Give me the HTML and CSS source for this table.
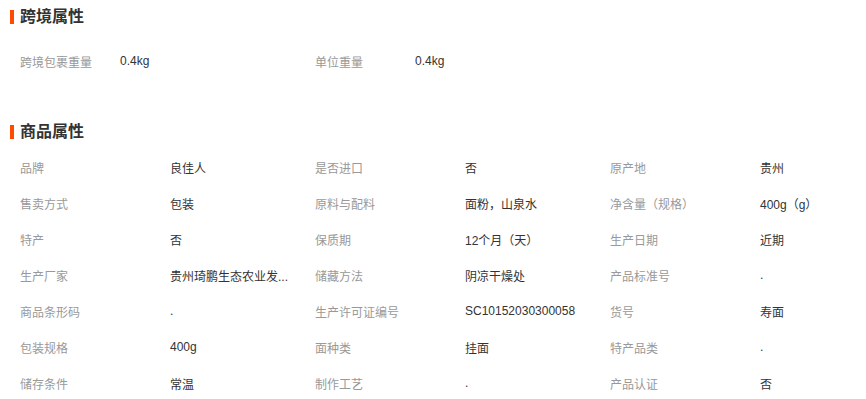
FILE: index.html
```html
<!DOCTYPE html>
<html lang="zh-CN">
<head>
<meta charset="utf-8">
<title>属性</title>
<link rel="stylesheet" href="styles.css">
</head>
<body>
<div class="page">
  <section class="block block-cross">
    <h3 class="block-title">跨境属性</h3>
    <ul class="attrs attrs-cross">
      <li class="attr"><span class="attr-name">跨境包裹重量</span><span class="attr-value">0.4kg</span></li>
      <li class="attr"><span class="attr-name">单位重量</span><span class="attr-value">0.4kg</span></li>
    </ul>
  </section>
  <section class="block block-goods">
    <h3 class="block-title">商品属性</h3>
    <ul class="attrs attrs-goods">
      <li class="attr"><span class="attr-name">品牌</span><span class="attr-value">良佳人</span></li>
      <li class="attr"><span class="attr-name">是否进口</span><span class="attr-value">否</span></li>
      <li class="attr"><span class="attr-name">原产地</span><span class="attr-value">贵州</span></li>
      <li class="attr"><span class="attr-name">售卖方式</span><span class="attr-value">包装</span></li>
      <li class="attr"><span class="attr-name">原料与配料</span><span class="attr-value">面粉，山泉水</span></li>
      <li class="attr"><span class="attr-name">净含量（规格）</span><span class="attr-value">400g（g）</span></li>
      <li class="attr"><span class="attr-name">特产</span><span class="attr-value">否</span></li>
      <li class="attr"><span class="attr-name">保质期</span><span class="attr-value">12个月（天）</span></li>
      <li class="attr"><span class="attr-name">生产日期</span><span class="attr-value">近期</span></li>
      <li class="attr"><span class="attr-name">生产厂家</span><span class="attr-value" title="贵州琦鹏生态农业发展有限公司">贵州琦鹏生态农业发...</span></li>
      <li class="attr"><span class="attr-name">储藏方法</span><span class="attr-value">阴凉干燥处</span></li>
      <li class="attr"><span class="attr-name">产品标准号</span><span class="attr-value">.</span></li>
      <li class="attr"><span class="attr-name">商品条形码</span><span class="attr-value">.</span></li>
      <li class="attr"><span class="attr-name">生产许可证编号</span><span class="attr-value">SC10152030300058</span></li>
      <li class="attr"><span class="attr-name">货号</span><span class="attr-value">寿面</span></li>
      <li class="attr"><span class="attr-name">包装规格</span><span class="attr-value">400g</span></li>
      <li class="attr"><span class="attr-name">面种类</span><span class="attr-value">挂面</span></li>
      <li class="attr"><span class="attr-name">特产品类</span><span class="attr-value">.</span></li>
      <li class="attr"><span class="attr-name">储存条件</span><span class="attr-value">常温</span></li>
      <li class="attr"><span class="attr-name">制作工艺</span><span class="attr-value">.</span></li>
      <li class="attr"><span class="attr-name">产品认证</span><span class="attr-value">否</span></li>
    </ul>
  </section>
</div>
</body>
</html>
```
FILE: styles.css
```css
* { box-sizing: border-box; }
html, body { margin: 0; padding: 0; background: #fff; }
body {
  font-family: "Liberation Sans", Arial, "Noto Sans CJK SC", sans-serif;
  font-size: 12px;
  color: #333;
}
.page { padding: 7px 0 0 10px; width: 866px; }
.block-title {
  margin: 0;
  height: 20px;
  line-height: 20px;
  font-size: 16px;
  font-weight: bold;
  color: #333;
  display: flex;
  align-items: center;
  gap: 6px;
}
.block-title::before {
  content: "";
  width: 4px;
  height: 14px;
  background: #ff4a00;
}
.attrs {
  list-style: none;
  margin: 0;
  padding: 0 0 0 10px;
  display: grid;
  grid-template-columns: repeat(3, 295px);
}
.attrs-cross { margin-top: 16px; margin-bottom: 43px; }
.attrs-goods { margin-top: 7px; }
.attr {
  display: flex;
  align-items: center;
  height: 36px;
}
.attr-name { color: #999; flex: none; }
.attr-value {
  color: #333;
  white-space: nowrap;
}
.attrs-cross .attr-name { width: 100px; }
.attrs-goods .attr-name { width: 150px; }
```
